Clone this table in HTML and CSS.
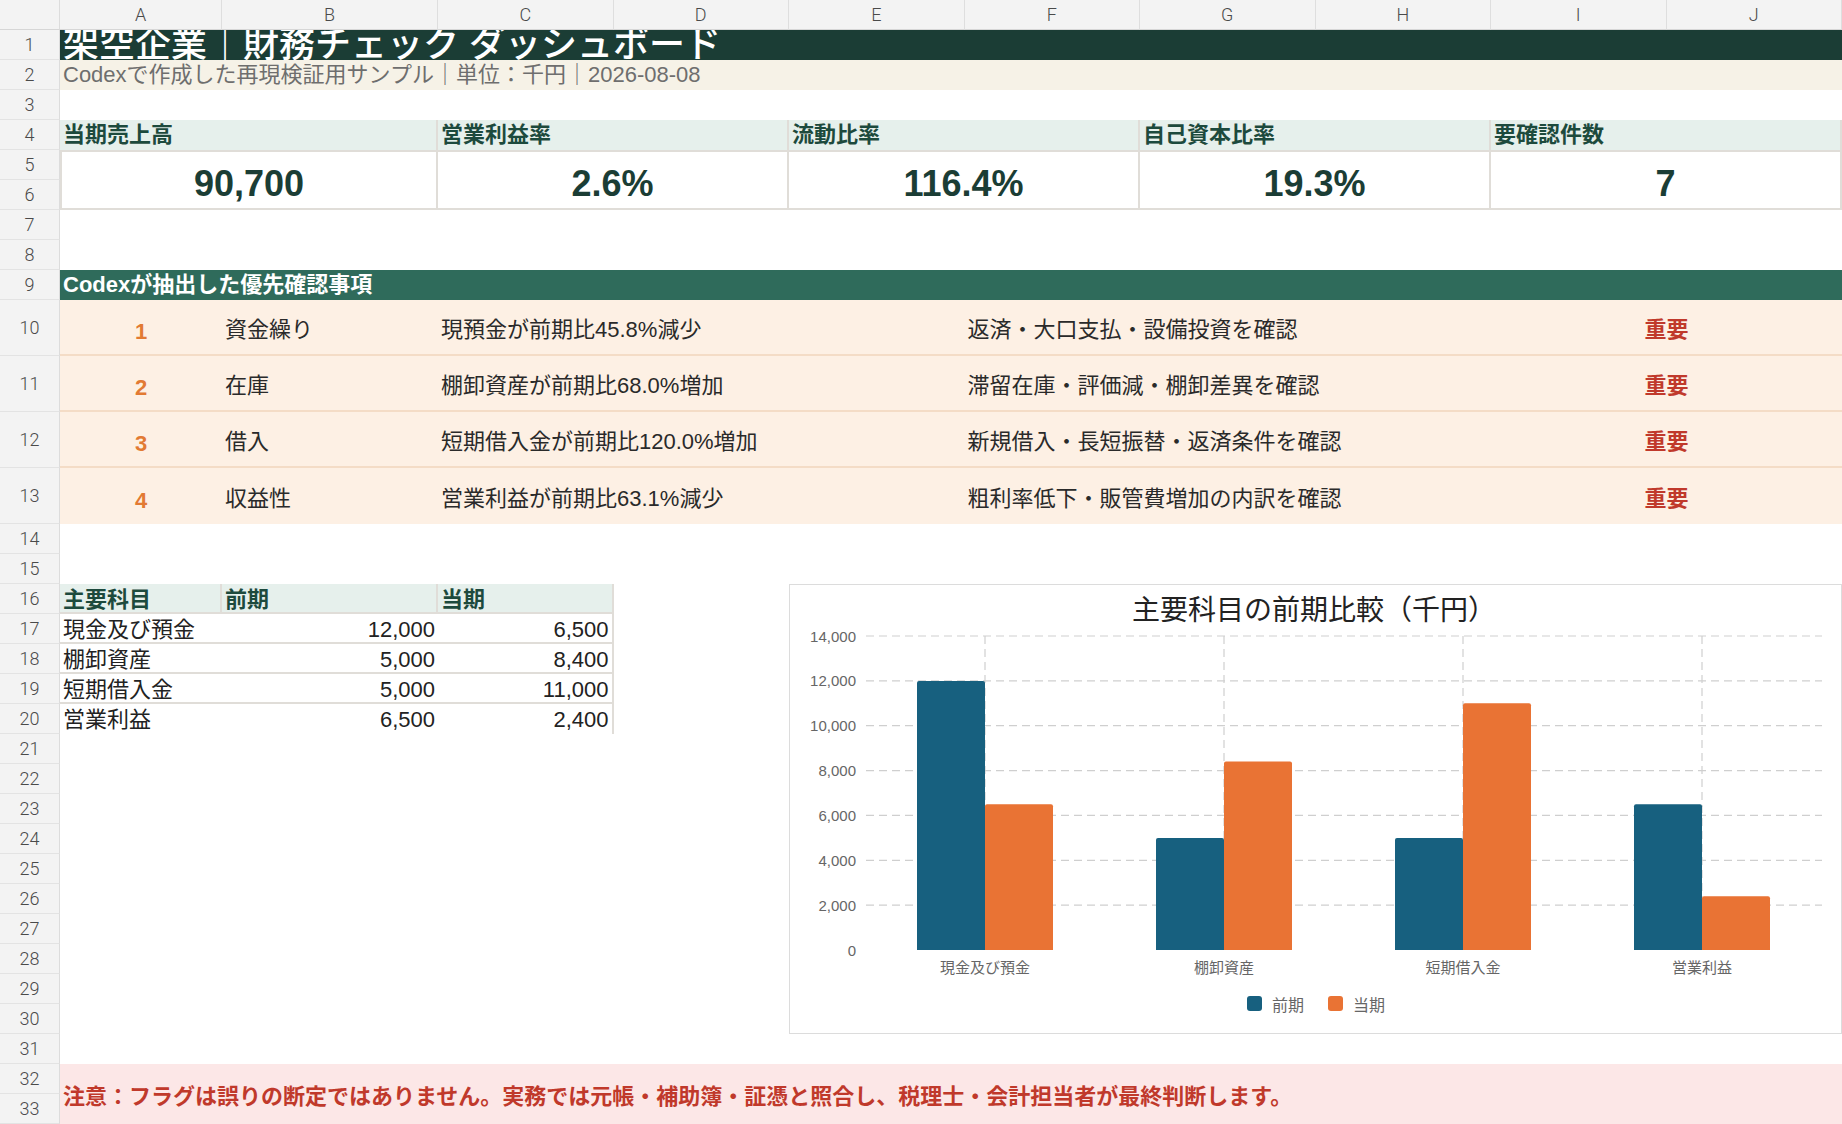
FILE: index.html
```html
<!DOCTYPE html>
<html lang="ja">
<head>
<meta charset="utf-8">
<title>架空企業｜財務チェック ダッシュボード</title>
<link rel="stylesheet" href="styles.css">
</head>
<body>
<div class="sheet">
  <div class="corner"></div>
  <div class="colh">A</div><div class="colh">B</div><div class="colh">C</div><div class="colh">D</div><div class="colh">E</div>
  <div class="colh">F</div><div class="colh">G</div><div class="colh">H</div><div class="colh">I</div><div class="colh">J</div>

  <div class="rowh">1</div><div class="rowh">2</div><div class="rowh">3</div><div class="rowh">4</div><div class="rowh">5</div>
  <div class="rowh">6</div><div class="rowh">7</div><div class="rowh">8</div><div class="rowh">9</div><div class="rowh">10</div>
  <div class="rowh">11</div><div class="rowh">12</div><div class="rowh">13</div><div class="rowh">14</div><div class="rowh">15</div>
  <div class="rowh">16</div><div class="rowh">17</div><div class="rowh">18</div><div class="rowh">19</div><div class="rowh">20</div>
  <div class="rowh">21</div><div class="rowh">22</div><div class="rowh">23</div><div class="rowh">24</div><div class="rowh">25</div>
  <div class="rowh">26</div><div class="rowh">27</div><div class="rowh">28</div><div class="rowh">29</div><div class="rowh">30</div>
  <div class="rowh">31</div><div class="rowh">32</div><div class="rowh">33</div>

  <div class="title"><span class="title-text">架空企業｜財務チェック ダッシュボード</span></div>
  <div class="subtitle">Codexで作成した再現検証用サンプル｜単位：千円｜2026-08-08</div>

  <div class="kpis">
    <div class="kpi first"><div class="kpi-label">当期売上高</div><div class="kpi-value">90,700</div></div>
    <div class="kpi"><div class="kpi-label">営業利益率</div><div class="kpi-value">2.6%</div></div>
    <div class="kpi"><div class="kpi-label">流動比率</div><div class="kpi-value">116.4%</div></div>
    <div class="kpi"><div class="kpi-label">自己資本比率</div><div class="kpi-value">19.3%</div></div>
    <div class="kpi"><div class="kpi-label">要確認件数</div><div class="kpi-value">7</div></div>
  </div>

  <div class="section">Codexが抽出した優先確認事項</div>

  <div class="prow r10">
    <div class="p-no">1</div><div class="p-cat">資金繰り</div><div class="p-desc">現預金が前期比45.8%減少</div>
    <div class="p-act">返済・大口支払・設備投資を確認</div><div class="p-flag">重要</div>
  </div>
  <div class="prow r11">
    <div class="p-no">2</div><div class="p-cat">在庫</div><div class="p-desc">棚卸資産が前期比68.0%増加</div>
    <div class="p-act">滞留在庫・評価減・棚卸差異を確認</div><div class="p-flag">重要</div>
  </div>
  <div class="prow r12">
    <div class="p-no">3</div><div class="p-cat">借入</div><div class="p-desc">短期借入金が前期比120.0%増加</div>
    <div class="p-act">新規借入・長短振替・返済条件を確認</div><div class="p-flag">重要</div>
  </div>
  <div class="prow r13 last">
    <div class="p-no">4</div><div class="p-cat">収益性</div><div class="p-desc">営業利益が前期比63.1%減少</div>
    <div class="p-act">粗利率低下・販管費増加の内訳を確認</div><div class="p-flag">重要</div>
  </div>

  <div class="table">
    <div class="th">主要科目</div><div class="th">前期</div><div class="th endc">当期</div>
    <div class="td">現金及び預金</div><div class="td num">12,000</div><div class="td num endc">6,500</div>
    <div class="td">棚卸資産</div><div class="td num">5,000</div><div class="td num endc">8,400</div>
    <div class="td">短期借入金</div><div class="td num">5,000</div><div class="td num endc">11,000</div>
    <div class="td lastr">営業利益</div><div class="td num lastr">6,500</div><div class="td num endc lastr">2,400</div>
  </div>

  <div class="chart">
    <svg width="1051" height="448" viewBox="0 0 1051 448" xmlns="http://www.w3.org/2000/svg">
      <text class="c-title" x="524" y="23">主要科目の前期比較（千円）</text>
      <g class="grid">
        <line x1="76" y1="51" x2="1032" y2="51"/>
        <line x1="76" y1="95.9" x2="1032" y2="95.9"/>
        <line x1="76" y1="140.7" x2="1032" y2="140.7"/>
        <line x1="76" y1="185.6" x2="1032" y2="185.6"/>
        <line x1="76" y1="230.4" x2="1032" y2="230.4"/>
        <line x1="76" y1="275.3" x2="1032" y2="275.3"/>
        <line x1="76" y1="320.1" x2="1032" y2="320.1"/>
        <line x1="195" y1="51" x2="195" y2="365"/>
        <line x1="434" y1="51" x2="434" y2="365"/>
        <line x1="673" y1="51" x2="673" y2="365"/>
        <line x1="912" y1="51" x2="912" y2="365"/>
      </g>
      <g class="ylab">
        <text x="66" y="51">14,000</text>
        <text x="66" y="95.9">12,000</text>
        <text x="66" y="140.7">10,000</text>
        <text x="66" y="185.6">8,000</text>
        <text x="66" y="230.4">6,000</text>
        <text x="66" y="275.3">4,000</text>
        <text x="66" y="320.1">2,000</text>
        <text x="66" y="365">0</text>
      </g>
      <g class="prev">
        <path d="M127 365V97.9a2 2 0 0 1 2-2h64a2 2 0 0 1 2 2V365Z"/>
        <path d="M366 365V254.9a2 2 0 0 1 2-2h64a2 2 0 0 1 2 2V365Z"/>
        <path d="M605 365V254.9a2 2 0 0 1 2-2h64a2 2 0 0 1 2 2V365Z"/>
        <path d="M844 365V221.2a2 2 0 0 1 2-2h64a2 2 0 0 1 2 2V365Z"/>
      </g>
      <g class="cur">
        <path d="M195 365V221.2a2 2 0 0 1 2-2h64a2 2 0 0 1 2 2V365Z"/>
        <path d="M434 365V178.5a2 2 0 0 1 2-2h64a2 2 0 0 1 2 2V365Z"/>
        <path d="M673 365V120.3a2 2 0 0 1 2-2h64a2 2 0 0 1 2 2V365Z"/>
        <path d="M912 365V313.2a2 2 0 0 1 2-2h64a2 2 0 0 1 2 2V365Z"/>
      </g>
      <g class="xlab">
        <text x="195" y="381">現金及び預金</text>
        <text x="434" y="381">棚卸資産</text>
        <text x="673" y="381">短期借入金</text>
        <text x="912" y="381">営業利益</text>
      </g>
      <rect class="sw-prev" x="457" y="411" width="15" height="15" rx="3"/>
      <text class="leg" x="482" y="418.5">前期</text>
      <rect class="sw-cur" x="538" y="411" width="15" height="15" rx="3"/>
      <text class="leg" x="563" y="418.5">当期</text>
    </svg>
  </div>

  <div class="note">注意：フラグは誤りの断定ではありません。実務では元帳・補助簿・証憑と照合し、税理士・会計担当者が最終判断します。</div>
</div>
</body>
</html>
```

FILE: styles.css
```css
* { box-sizing: border-box; }

html, body {
  margin: 0;
  padding: 0;
  background: #ffffff;
}

body {
  width: 1842px;
  height: 1124px;
  overflow: hidden;
  font-family: "Liberation Sans", "Noto Sans CJK JP", sans-serif;
  font-size: 22px;
  color: #222222;
}

.sheet {
  display: grid;
  grid-template-columns: 60px 162px 216px repeat(8, 175.5px);
  grid-template-rows: 30px repeat(9, 30px) repeat(4, 56px) repeat(20, 30px);
  width: 1842px;
  height: 1124px;
}

/* headers */
.corner {
  grid-row: 1;
  grid-column: 1;
  background: #f3f3f3;
  border-right: 1px solid #dcdcdc;
  border-bottom: 1px solid #d6d6d6;
}

.colh {
  grid-row: 1;
  background: #f3f3f3;
  border-right: 1px solid #dedede;
  border-bottom: 1px solid #d6d6d6;
  display: flex;
  align-items: center;
  justify-content: center;
  font-family: Roboto, "Liberation Sans", sans-serif;
  font-weight: 300;
  font-size: 18px;
  color: #4a4a4a;
}

.rowh {
  grid-column: 1;
  background: #f3f3f3;
  border-right: 1px solid #dcdcdc;
  border-bottom: 1px solid #e3e3e3;
  display: flex;
  align-items: center;
  justify-content: center;
  font-family: Roboto, "Liberation Sans", sans-serif;
  font-weight: 300;
  font-size: 18px;
  color: #4a4a4a;
}

/* title rows */
.title {
  grid-row: 2;
  grid-column: 2 / 12;
  background: #1b3d35;
  color: #ffffff;
  padding-left: 3px;
  overflow: hidden;
  white-space: nowrap;
  display: flex;
  align-items: center;
}

.title-text {
  font-size: 36px;
  line-height: 36px;
  font-weight: 500;
}

.subtitle {
  grid-row: 3;
  grid-column: 2 / 12;
  background: #f6f2e7;
  color: #6e6e6e;
  font-size: 22px;
  line-height: 30px;
  padding-left: 3px;
  white-space: nowrap;
}

/* KPI */
.kpis {
  grid-row: 5 / 8;
  grid-column: 2 / 12;
  display: grid;
  grid-template-columns: 378px repeat(4, 351px);
}

.kpi {
  display: flex;
  flex-direction: column;
}

.kpi-label {
  height: 30px;
  background: #e6f0ec;
  border-right: 2px solid #e0ddd8;
  color: #1d4a3d;
  font-weight: bold;
  line-height: 30px;
  padding-left: 3px;
  white-space: nowrap;
}

.kpi-value {
  height: 60px;
  padding-top: 7px;
  border-top: 2px solid #e0ddd8;
  border-right: 2px solid #e0ddd8;
  border-bottom: 2px solid #e0ddd8;
  display: flex;
  align-items: center;
  justify-content: center;
  font-size: 36px;
  font-weight: bold;
  color: #1b3d35;
}

.kpi.first .kpi-value {
  border-left: 2px solid #e0ddd8;
}

/* priority section */
.section {
  grid-row: 10;
  grid-column: 2 / 12;
  background: #2f6b5b;
  color: #ffffff;
  font-weight: bold;
  line-height: 30px;
  padding-left: 3px;
  white-space: nowrap;
}

.prow {
  grid-column: 2 / 12;
  display: grid;
  grid-template-columns: 162px 216px 526.5px 526.5px 351px;
  align-items: center;
  background: #fdf0e4;
  border-bottom: 2px solid #f4dcc6;
  color: #2a2a2a;
  white-space: nowrap;
}

.prow.last { border-bottom: none; }

.r10 { grid-row: 11; }
.r11 { grid-row: 12; }
.r12 { grid-row: 13; }
.r13 { grid-row: 14; }

.p-no {
  text-align: center;
  font-weight: bold;
  color: #e27a33;
  padding-top: 9px;
}

.p-cat, .p-desc, .p-act {
  padding-left: 3px;
}

.p-flag {
  text-align: center;
  font-weight: bold;
  color: #c0392b;
}

/* data table */
.table {
  grid-row: 17 / 22;
  grid-column: 2 / 5;
  display: grid;
  grid-template-columns: 162px 216px 175.5px;
  grid-template-rows: repeat(5, 30px);
}

.th {
  background: #e6f0ec;
  color: #1d4a3d;
  font-weight: bold;
  line-height: 26px;
  padding: 3px 0 0 3px;
  border-right: 2px solid #e0ddd8;
  border-bottom: 2px solid #e0ddd8;
  white-space: nowrap;
}

.td {
  line-height: 26px;
  padding: 3px 3px 0;
  border-bottom: 2px solid #e0ddd8;
  white-space: nowrap;
  color: #222222;
}

.td.lastr { border-bottom: none; }

.num { text-align: right; }

.endc { border-right: 2px solid #e0ddd8; }

/* chart */
.chart {
  grid-row: 17 / 32;
  grid-column: 6 / 12;
  border: 1px solid #dcdcdc;
  background: #ffffff;
  overflow: hidden;
}

.chart svg { display: block; }

.c-title {
  font-family: "Noto Sans CJK JP", sans-serif;
  font-size: 28px;
  fill: #222222;
  text-anchor: middle;
  dominant-baseline: central;
}

.grid line {
  stroke: #cfcfcf;
  stroke-width: 1.2;
  stroke-dasharray: 8 5;
}

.ylab text {
  font-family: "Liberation Sans", sans-serif;
  font-size: 15px;
  fill: #666666;
  text-anchor: end;
  dominant-baseline: central;
}

.xlab text {
  font-family: "Noto Sans CJK JP", sans-serif;
  font-size: 15px;
  fill: #666666;
  text-anchor: middle;
  dominant-baseline: central;
}

.prev path { fill: #17607f; }
.cur path { fill: #e97334; }

.sw-prev { fill: #17607f; }
.sw-cur { fill: #e97334; }

.leg {
  font-family: "Noto Sans CJK JP", sans-serif;
  font-size: 16px;
  fill: #666666;
  dominant-baseline: central;
}

/* footer note */
.note {
  grid-row: 33 / 35;
  grid-column: 2 / 12;
  background: #fce7e7;
  color: #c0392b;
  font-weight: bold;
  display: flex;
  align-items: center;
  padding-left: 3px;
  white-space: nowrap;
}
```
